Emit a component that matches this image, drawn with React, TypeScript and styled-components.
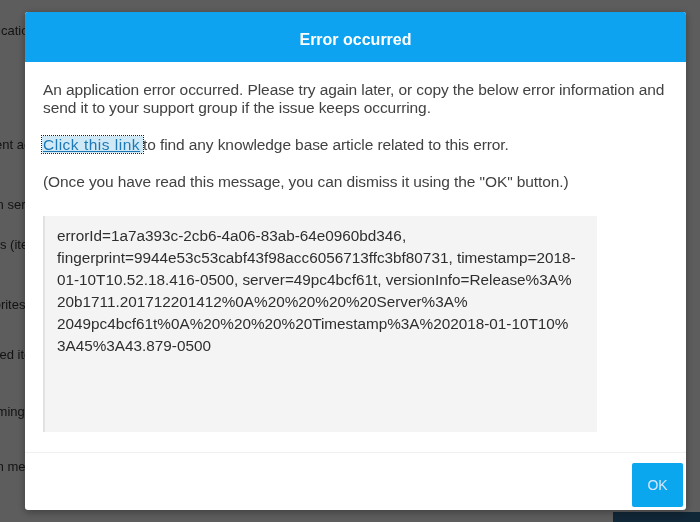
import React from 'react'
import styled, { createGlobalStyle } from 'styled-components'

const GlobalStyle = createGlobalStyle`
  html, body {
    margin: 0;
    padding: 0;
    width: 700px;
    height: 522px;
    overflow: hidden;
    font-family: "Liberation Sans", Arial, sans-serif;
  }
`

const pageRows = [
  { text: 'Applications in use', top: 24 },
  { text: 'Recent activity in the group', top: 100 },
  { text: 'Open service actions', top: 46 },
  { text: 'Views (items)', top: 26 },
  { text: 'Favorites list', top: 46 },
  { text: 'Shared items for group', top: 36 },
  { text: 'Incoming', top: 43 },
  { text: 'Team members online', top: 41 },
]

const errorLines = [
  'errorId=1a7a393c-2cb6-4a06-83ab-64e0960bd346,',
  'fingerprint=9944e53c53cabf43f98acc6056713ffc3bf80731, timestamp=2018-',
  '01-10T10.52.18.416-0500, server=49pc4bcf61t, versionInfo=Release%3A%',
  '20b1711.201712201412%0A%20%20%20%20Server%3A%',
  '2049pc4bcf61t%0A%20%20%20%20Timestamp%3A%202018-01-10T10%',
  '3A45%3A43.879-0500',
]

export default function App() {
  return (
    <>
      <GlobalStyle />
      <Page>
        {pageRows.map((row, i) => (
          <PageRow key={i} $top={row.top}>{row.text}</PageRow>
        ))}
        <PageFooter>
          <PageButton />
        </PageFooter>
      </Page>
      <Overlay />
      <Modal role="dialog">
        <Header>Error occurred</Header>
        <Body>
          <Paragraph>
            An application error occurred. Please try again later, or copy the below error information and
            send it to your support group if the issue keeps occurring.
          </Paragraph>
          <Paragraph>
            <Link href="#">Click this link</Link>to find any knowledge base article related to this error.
          </Paragraph>
          <Paragraph>
            (Once you have read this message, you can dismiss it using the "OK" button.)
          </Paragraph>
          <ErrorBox>
            {errorLines.map((line, i) => (
              <ErrorLine key={i}>{line}</ErrorLine>
            ))}
          </ErrorBox>
        </Body>
        <Footer>
          <OkButton>OK</OkButton>
        </Footer>
      </Modal>
    </>
  )
}

const Page = styled.div`
  width: 700px;
  height: 522px;
  background: #f4f4f4;
  display: flex;
  flex-direction: column;
  filter: blur(0.6px);
`

const PageRow = styled.div<{ $top: number }>`
  margin-top: ${p => p.$top}px;
  margin-left: -28px;
  font-size: 13px;
  line-height: 14px;
  color: #333;
  white-space: nowrap;
`

const PageFooter = styled.div`
  margin-top: auto;
  display: flex;
  justify-content: flex-end;
`

const PageButton = styled.div`
  width: 87px;
  height: 10px;
  background: #2c6690;
`

const Overlay = styled.div`
  position: fixed;
  inset: 0;
  background: rgba(0, 0, 0, 0.62);
`

const Modal = styled.div`
  position: fixed;
  left: 25px;
  top: 12px;
  width: 661px;
  height: 498px;
  background: #ffffff;
  border-radius: 3px;
  box-shadow: 0 2px 8px rgba(0, 0, 0, 0.35);
  display: flex;
  flex-direction: column;
  overflow: hidden;
`

const Header = styled.div`
  height: 50px;
  flex-shrink: 0;
  background: #0ea3f0;
  color: #ffffff;
  display: flex;
  align-items: center;
  justify-content: center;
  font-size: 16px;
  font-weight: bold;
  padding-top: 6px;
  box-sizing: border-box;
`

const Body = styled.div`
  flex: 1;
  padding: 19px 14px 0 18px;
  display: flex;
  flex-direction: column;
  gap: 19px;
`

const Paragraph = styled.p`
  margin: 0;
  font-size: 15.5px;
  line-height: 18px;
  color: #424242;
  letter-spacing: -0.1px;
`

const Link = styled.a`
  display: inline-block;
  line-height: 17px;
  padding: 0 3px 0 1px;
  margin-left: -1px;
  letter-spacing: 0.5px;
  color: #1d78b5;
  text-decoration: underline;
  background: #cfeaf6;
  outline: 1px dotted #222;
  outline-offset: 0;
`

const ErrorBox = styled.div`
  margin-top: 6px;
  height: 216px;
  width: 554px;
  box-sizing: border-box;
  background: #f4f4f4;
  border-left: 2px solid #e2e2e2;
  padding: 9px 8px 9px 12px;
  font-size: 15.3px;
  line-height: 22px;
  color: #2e2e2e;
`

const ErrorLine = styled.div`
  white-space: nowrap;
`

const Footer = styled.div`
  height: 58px;
  flex-shrink: 0;
  border-top: 1px solid #f0f0f0;
  box-sizing: border-box;
  display: flex;
  justify-content: flex-end;
  align-items: flex-end;
  padding: 0 3px 3px 0;
`

const OkButton = styled.button`
  width: 51px;
  height: 44px;
  border: none;
  border-radius: 2px;
  background: #0aa6ee;
  color: #d9e6ff;
  font-family: "Liberation Sans", Arial, sans-serif;
  font-size: 14px;
  cursor: pointer;
`
